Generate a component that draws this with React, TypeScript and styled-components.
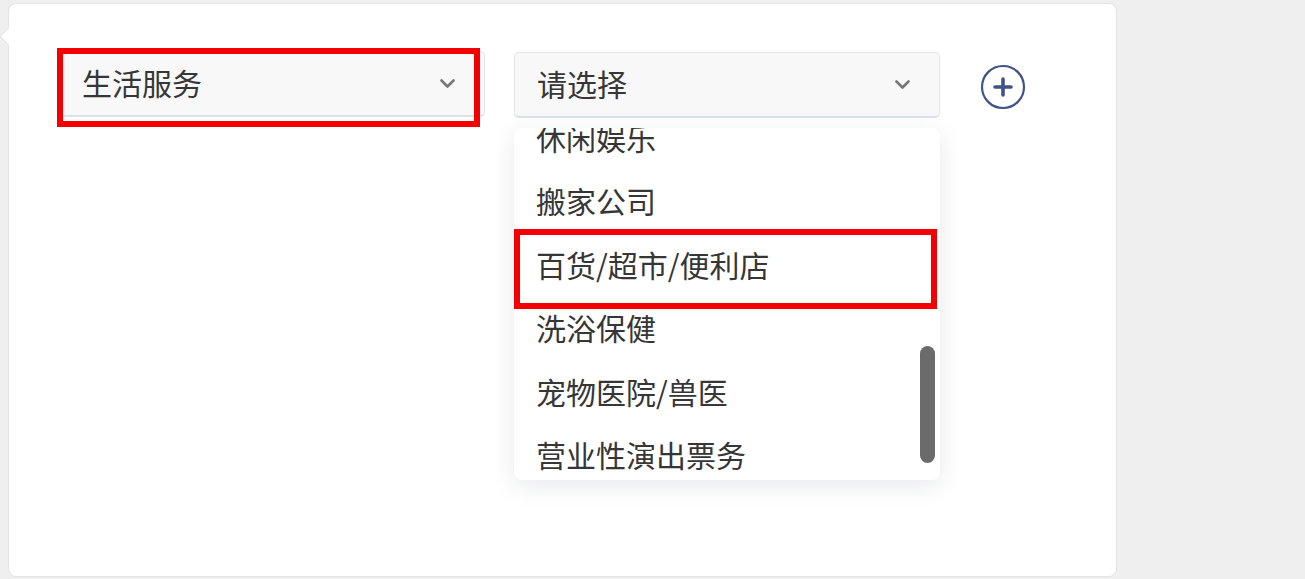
import React from 'react';
import styled, { createGlobalStyle } from 'styled-components';

const GlobalStyle = createGlobalStyle`
  body {
    margin: 0;
    background: #efefef;
    font-family: "Noto Sans CJK SC", "Noto Sans", sans-serif;
    color: #333;
  }
`;

const subOptions = ['休闲娱乐', '搬家公司', '百货/超市/便利店', '洗浴保健', '宠物医院/兽医', '营业性演出票务'];

const ChevronDown: React.FC = () => (
  <svg width="15" height="9" viewBox="0 0 15 9">
    <path d="M1.5 1.5l6 6 6-6" fill="none" stroke="#777" strokeWidth="2.6" strokeLinecap="round" strokeLinejoin="round" />
  </svg>
);

const PlusCircle: React.FC = () => (
  <svg width="46" height="46" viewBox="0 0 46 46">
    <circle cx="23" cy="23" r="21" fill="none" stroke="#3f5388" strokeWidth="2.2" />
    <path d="M15 23h16M23 15v16" stroke="#3f5388" strokeWidth="3.6" strokeLinecap="round" />
  </svg>
);

const App: React.FC = () => {
  return (
    <>
      <GlobalStyle />
      <Card>
        <FilterRow>
          <SelectWrap>
            <Select>
              <SelectText>生活服务</SelectText>
              <ChevronDown />
            </Select>
            <Marker />
          </SelectWrap>

          <SelectWrap $offset={1}>
            <Select>
              <SelectText>请选择</SelectText>
              <ChevronDown />
            </Select>
            <Dropdown>
              <OptionList>
                {subOptions.map((label, i) => (
                  <Option key={label}>
                    {label}
                    {i === 2 && <Marker $inList />}
                  </Option>
                ))}
              </OptionList>
              <ScrollThumb />
            </Dropdown>
          </SelectWrap>

          <AddButton>
            <PlusCircle />
          </AddButton>
        </FilterRow>
      </Card>
    </>
  );
};

const Card = styled.div`
  position: relative;
  box-sizing: border-box;
  width: 1109px;
  height: 574px;
  margin: 3px 0 0 8px;
  padding: 47px 0 0 50px;
  background: #fff;
  border: 1px solid #e3e3e3;
  border-radius: 8px;

  &::before {
    content: '';
    position: absolute;
    left: -7px;
    top: 26px;
    width: 12px;
    height: 12px;
    background: #fff;
    border-left: 1px solid #e3e3e3;
    border-bottom: 1px solid #e3e3e3;
    transform: rotate(45deg);
  }
`;

const FilterRow = styled.div`
  display: flex;
  align-items: flex-start;
  gap: 29px;
`;

const SelectWrap = styled.div<{ $offset?: number }>`
  position: relative;
  width: 426px;
  margin-top: ${(p) => p.$offset || 0}px;
`;

const Select = styled.div`
  box-sizing: border-box;
  height: 66px;
  display: flex;
  align-items: center;
  justify-content: space-between;
  padding: 0 29px 3px 22px;
  background: #f8f8f8;
  border: 1px solid #e1e4e8;
  border-bottom: 2px solid #dce1e7;
  border-radius: 5px;
  cursor: pointer;

  svg {
    margin-top: 2px;
  }
`;

const SelectText = styled.span`
  font-size: 30px;
  color: #363636;
`;

const Marker = styled.div<{ $inList?: boolean }>`
  position: absolute;
  box-sizing: border-box;
  border: 6px solid #f40000;
  pointer-events: none;
  ${(p) =>
    p.$inList
      ? `left: 0; right: 3px; top: -3px; bottom: -13px;`
      : `left: -2px; top: -3px; width: 423px; height: 79px;`}
`;

const Dropdown = styled.div`
  position: absolute;
  top: calc(100% + 10px);
  left: 0;
  width: 100%;
  height: 352px;
  background: #fff;
  border-radius: 8px;
  box-shadow: 0 6px 24px rgba(30, 40, 60, 0.1);
  overflow: hidden;
  z-index: 2;
`;

const OptionList = styled.div`
  margin-top: -23px;
`;

const Option = styled.div`
  position: relative;
  box-sizing: border-box;
  height: 63.5px;
  display: flex;
  align-items: center;
  padding-left: 22px;
  font-size: 30px;
  color: #363636;
`;

const ScrollThumb = styled.div`
  position: absolute;
  right: 5px;
  top: 218px;
  width: 15px;
  height: 117px;
  border-radius: 8px;
  background: #6b6b6b;
`;

const AddButton = styled.button`
  margin: 13px 0 0 11px;
  padding: 0;
  border: none;
  background: none;
  display: flex;
  cursor: pointer;
`;

export default App;
